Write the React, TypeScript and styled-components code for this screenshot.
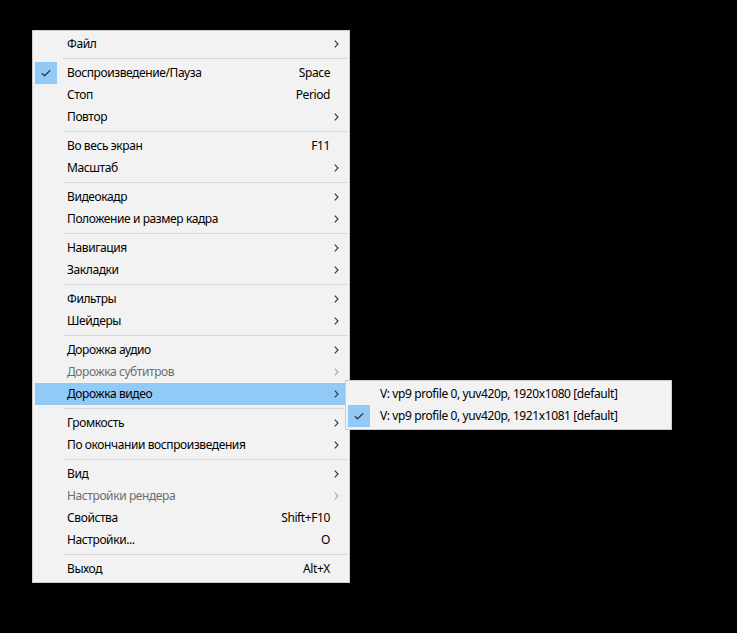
import React from "react";
import styled, { createGlobalStyle } from "styled-components";

type Entry =
  | { kind: "sep" }
  | {
      kind: "item";
      label: string;
      shortcut?: string;
      sub?: boolean;
      checked?: boolean;
      disabled?: boolean;
      active?: boolean;
    };

const entries: Entry[] = [
  { kind: "item", label: "Файл", sub: true },
  { kind: "sep" },
  { kind: "item", label: "Воспроизведение/Пауза", shortcut: "Space", checked: true },
  { kind: "item", label: "Стоп", shortcut: "Period" },
  { kind: "item", label: "Повтор", sub: true },
  { kind: "sep" },
  { kind: "item", label: "Во весь экран", shortcut: "F11" },
  { kind: "item", label: "Масштаб", sub: true },
  { kind: "sep" },
  { kind: "item", label: "Видеокадр", sub: true },
  { kind: "item", label: "Положение и размер кадра", sub: true },
  { kind: "sep" },
  { kind: "item", label: "Навигация", sub: true },
  { kind: "item", label: "Закладки", sub: true },
  { kind: "sep" },
  { kind: "item", label: "Фильтры", sub: true },
  { kind: "item", label: "Шейдеры", sub: true },
  { kind: "sep" },
  { kind: "item", label: "Дорожка аудио", sub: true },
  { kind: "item", label: "Дорожка субтитров", sub: true, disabled: true },
  { kind: "item", label: "Дорожка видео", sub: true, active: true },
  { kind: "sep" },
  { kind: "item", label: "Громкость", sub: true },
  { kind: "item", label: "По окончании воспроизведения", sub: true },
  { kind: "sep" },
  { kind: "item", label: "Вид", sub: true },
  { kind: "item", label: "Настройки рендера", sub: true, disabled: true },
  { kind: "item", label: "Свойства", shortcut: "Shift+F10" },
  { kind: "item", label: "Настройки...", shortcut: "O" },
  { kind: "sep" },
  { kind: "item", label: "Выход", shortcut: "Alt+X" },
];

const videoTracks = [
  { label: "V: vp9 profile 0, yuv420p, 1920x1080 [default]", checked: false },
  { label: "V: vp9 profile 0, yuv420p, 1921x1081 [default]", checked: true },
];

const Check = () => (
  <svg width="10" height="8" viewBox="0 0 10 8">
    <path d="M0.8 4.2 L3.6 6.8 L9.2 1.2" fill="none" stroke="#3a3a3a" strokeWidth="1.3" />
  </svg>
);

const Chevron = ({ dim }: { dim?: boolean }) => (
  <svg width="5" height="8" viewBox="0 0 5 8">
    <path d="M0.8 0.6 L4 4 L0.8 7.4" fill="none" stroke={dim ? "#a8a8a8" : "#333"} strokeWidth="1.1" />
  </svg>
);

const VideoTrackMenu = () => (
  <SubMenu>
    {videoTracks.map((t) => (
      <SubItem key={t.label}>
        <CheckCell checked={t.checked}>{t.checked && <Check />}</CheckCell>
        <Label>{t.label}</Label>
      </SubItem>
    ))}
  </SubMenu>
);

const App = () => {
  return (
    <Screen>
      <GlobalStyle />
      <Menu>
        {entries.map((e, i) =>
          e.kind === "sep" ? (
            <Separator key={i} />
          ) : (
            <Item key={i} active={e.active} disabled={e.disabled}>
              <CheckCell checked={e.checked}>{e.checked && <Check />}</CheckCell>
              <Label>{e.label}</Label>
              <Shortcut>{e.shortcut}</Shortcut>
              <Arrow>{e.sub && <Chevron dim={e.disabled} />}</Arrow>
              {e.active && <VideoTrackMenu />}
            </Item>
          )
        )}
      </Menu>
    </Screen>
  );
};

const GlobalStyle = createGlobalStyle`
  html, body {
    margin: 0;
    background: #000;
  }
  body {
    font-family: "Noto Sans", "Open Sans", sans-serif;
    font-size: 12px;
    letter-spacing: -0.4px;
  }
`;

const Screen = styled.div`
  width: 737px;
  height: 633px;
  padding: 30px 0 0 32px;
  box-sizing: border-box;
  background: #000;
`;

const Menu = styled.div`
  width: 318px;
  box-sizing: border-box;
  background: #f2f2f2;
  border: 1px solid #cccccc;
  padding: 2px;
  display: flex;
  flex-direction: column;
`;

const Item = styled.div<{ active?: boolean; disabled?: boolean }>`
  position: relative;
  height: 22px;
  display: grid;
  grid-template-columns: 22px 1fr auto 17px;
  align-items: center;
  background: ${(p) => (p.active ? "#91c9f7" : "transparent")};
  color: ${(p) => (p.disabled ? "#6d6d6d" : "#000")};
`;

const SubItem = styled.div`
  height: 22px;
  display: grid;
  grid-template-columns: 22px 1fr;
  align-items: center;
  color: #000;
`;

const CheckCell = styled.div<{ checked?: boolean }>`
  width: 22px;
  height: 22px;
  display: flex;
  align-items: center;
  justify-content: center;
  background: ${(p) => (p.checked ? "#91c9f7" : "transparent")};
`;

const Label = styled.span`
  padding-left: 10px;
  white-space: nowrap;
  line-height: 22px;
`;

const Shortcut = styled.span`
  white-space: nowrap;
  line-height: 22px;
  text-align: right;
`;

const Arrow = styled.span`
  display: flex;
  align-items: center;
  padding-left: 4px;
  height: 22px;
`;

const Separator = styled.div`
  height: 1px;
  margin: 3px 0 3px 28px;
  background: #d7d7d7;
`;

const SubMenu = styled.div`
  position: absolute;
  top: -3px;
  left: calc(100% - 2px);
  width: 327px;
  box-sizing: border-box;
  background: #f2f2f2;
  border: 1px solid #cccccc;
  padding: 2px;
  display: flex;
  flex-direction: column;
  z-index: 2;
`;

export default App;
